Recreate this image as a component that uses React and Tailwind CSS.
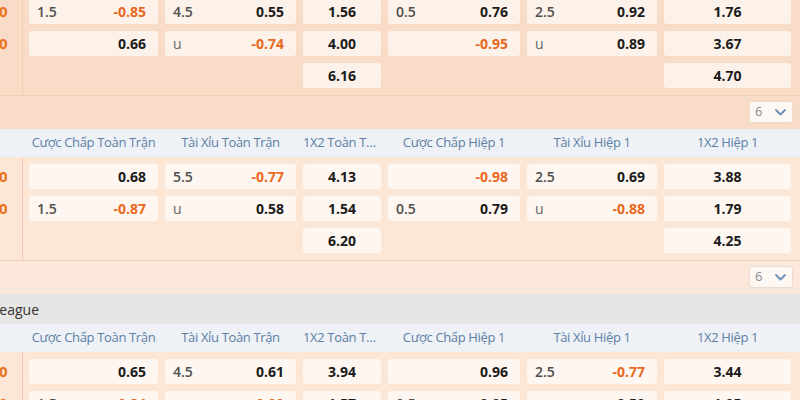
import React from "react";

const HEADERS = [
  "Cược Chấp Toàn Trận",
  "Tài Xỉu Toàn Trận",
  "1X2 Toàn Trận",
  "Cược Chấp Hiệp 1",
  "Tài Xỉu Hiệp 1",
  "1X2 Hiệp 1",
];

const COLS = "grid grid-cols-[129px_131px_78px_132px_130px_127px] gap-x-[7px]";

const S1 = [
  [["1.5", "-0.85"], ["4.5", "0.55"], "1.56", ["0.5", "0.76"], ["2.5", "0.92"], "1.76"],
  [["", "0.66"], ["u", "-0.74"], "4.00", ["", "-0.95"], ["u", "0.89"], "3.67"],
  [null, null, "6.16", null, null, "4.70"],
];
const S2 = [
  [["", "0.68"], ["5.5", "-0.77"], "4.13", ["", "-0.98"], ["2.5", "0.69"], "3.88"],
  [["1.5", "-0.87"], ["u", "0.58"], "1.54", ["0.5", "0.79"], ["u", "-0.88"], "1.79"],
  [null, null, "6.20", null, null, "4.25"],
];
const S3 = [
  [["", "0.65"], ["4.5", "0.61"], "3.94", ["", "0.96"], ["2.5", "-0.77"], "3.44"],
  [["1.5", "-0.84"], ["u", "-0.99"], "1.57", ["0.5", "0.95"], ["u", "0.59"], "1.95"],
];

function Num({ v }) {
  const neg = v.startsWith("-");
  return (
    <span className={neg ? "text-[14px] font-bold text-[#e8681f]" : "text-[14px] font-bold text-[#1b1b1b]"}>
      {v}
    </span>
  );
}

function Cell({ data, cellBg }) {
  if (data === null) return <div className="h-[25px]" />;
  if (typeof data === "string") {
    return (
      <div className={`h-[25px] rounded-[3px] ${cellBg} flex items-center justify-center`}>
        <Num v={data} />
      </div>
    );
  }
  const [label, value] = data;
  return (
    <div className={`h-[25px] rounded-[3px] ${cellBg} flex items-center justify-between pl-[8px] pr-[12px]`}>
      <span
        className={
          label === "u"
            ? "text-[14px] font-normal text-[#666]"
            : "text-[14px] font-semibold text-[#4d4d4d]"
        }
      >
        {label}
      </span>
      <Num v={value} />
    </div>
  );
}

function Body({ rows, bg, cellBg }) {
  return (
    <div className={`flex ${bg}`}>
      <div className="w-[23px] shrink-0 border-r border-[#f1cbb0] pt-[7px] flex flex-col gap-y-[7px] overflow-hidden">
        {rows.map((r, i) => (
          <div key={i} className="h-[25px] flex items-center">
            {i < 2 ? (
              <span className="-ml-[1px] text-[15px] font-bold text-[#e8731e]">0</span>
            ) : null}
          </div>
        ))}
      </div>
      <div className={`${COLS} gap-y-[7px] pl-[6px] pt-[7px] pb-[7px]`}>
        {rows.map((r, i) =>
          r.map((c, j) => <Cell key={`${i}-${j}`} data={c} cellBg={cellBg} />)
        )}
      </div>
    </div>
  );
}

function Footer({ bg }) {
  return (
    <div className={`h-[34px] border-t border-[#f1cdb3] ${bg} flex justify-end items-start pt-[5px] pr-[7px]`}>
      <div className="w-[44px] h-[22px] rounded-[3px] border border-[#ecdccf] bg-[#fdf8f4] flex items-center justify-between pl-[5px] pr-[6px]">
        <span className="text-[13px] text-[#8a8a8a]">6</span>
        <svg width="11" height="7" viewBox="0 0 11 7" fill="none">
          <path d="M1 1L5.5 5.5L10 1" stroke="#6f8fb5" strokeWidth="1.8" strokeLinecap="round" strokeLinejoin="round" />
        </svg>
      </div>
    </div>
  );
}

function Header() {
  return (
    <div className="h-[28px] bg-[#eef1f5] flex items-center">
      <div className="w-[23px] shrink-0" />
      <div className={`${COLS} pl-[6px]`}>
        {HEADERS.map((h) => (
          <div key={h} className="truncate text-center text-[13px] tracking-[-0.35px] text-[#5c7fa7]">
            {h}
          </div>
        ))}
      </div>
    </div>
  );
}

export default function App() {
  return (
    <div
      className="w-[800px] h-[400px] overflow-hidden bg-[#fce7d8]"
      style={{ fontFamily: '"Open Sans", "Noto Sans", sans-serif' }}
    >
      <div className="-mt-[8px]">
        <Body rows={S1} bg="bg-[#f9dcc7]" cellBg="bg-[#fdf2ea]" />
        <Footer bg="bg-[#f9dcc7]" />
        <Header />
        <Body rows={S2} bg="bg-[#fce6d6]" cellBg="bg-[#fef6f0]" />
        <Footer bg="bg-[#fce8da]" />
        <div className="h-[30px] bg-[#e6e6e6] flex items-center overflow-hidden">
          <span className="-ml-[8px] text-[14px] text-[#333]">League</span>
        </div>
        <Header />
        <Body rows={S3} bg="bg-[#fce6d6]" cellBg="bg-[#fef6f0]" />
      </div>
    </div>
  );
}
